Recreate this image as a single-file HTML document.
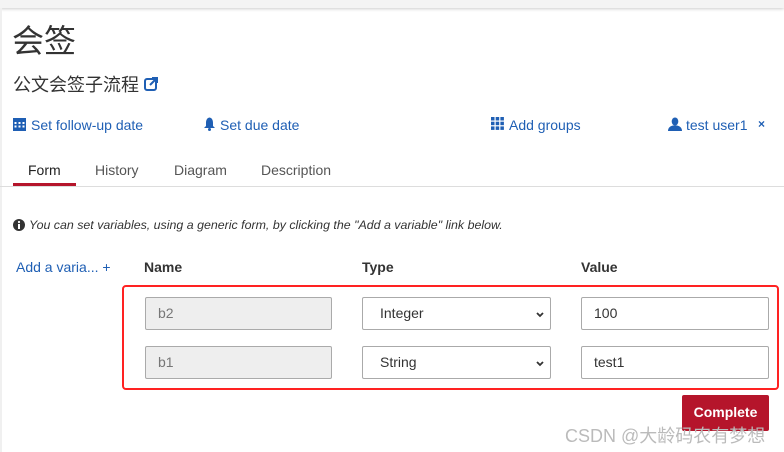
<!DOCTYPE html>
<html><head><meta charset="utf-8"><style>
*{margin:0;padding:0;box-sizing:border-box}
body{width:784px;height:452px;background:#fff;font-family:"Liberation Sans","Noto Sans CJK SC",sans-serif;position:relative;overflow:hidden;color:#333}
.a{position:absolute;white-space:nowrap}
.link{color:#1f5fb4;font-size:14px}
.inp{position:absolute;height:33px;border:1px solid #aaa;border-radius:2px;font-size:14px;padding:0 12px;line-height:31px;background:#fff;color:#333}
.dis{background:#eee;color:#777}
.th{font-weight:bold;font-size:14px;color:#333}
.chev{position:absolute;right:5px;top:12px}
</style></head><body>
<div class="a" style="left:0;top:0;width:784px;height:8px;background:#f4f4f4;box-shadow:0 1px 3px rgba(0,0,0,.2)"></div>
<div class="a" style="left:0;top:8px;width:2px;height:444px;background:#f0f0f0"></div>
<div class="a" style="left:12px;top:17px;font-size:32px;color:#333;font-family:'Noto Sans CJK SC',sans-serif;line-height:44px">会签</div>
<div class="a" style="left:13px;top:72px;font-size:18px;color:#333;font-family:'Noto Sans CJK SC',sans-serif;line-height:24px">公文会签子流程</div>
<svg class="a" style="left:144px;top:77px" width="14" height="14" viewBox="0 0 14 14"><rect x="1" y="2" width="11" height="11" rx="2" fill="none" stroke="#1f5fb4" stroke-width="2"/><path d="M6 8L12 2M8 1h5v5" stroke="#1f5fb4" stroke-width="2" fill="none"/></svg>
<svg class="a" style="left:13px;top:117px" width="13" height="14" viewBox="0 0 13 14"><rect x="0" y="1" width="13" height="13" fill="#1f5fb4"/><g fill="#fff"><rect x="1.5" y="5" width="2" height="2"/><rect x="5.5" y="5" width="2" height="2"/><rect x="9.5" y="5" width="2" height="2"/><rect x="1.5" y="8.5" width="2" height="2"/><rect x="5.5" y="8.5" width="2" height="2"/><rect x="9.5" y="8.5" width="2" height="2"/></g></svg>
<div class="a link" style="left:31px;top:117px">Set follow-up date</div>
<svg class="a" style="left:203px;top:117px" width="13" height="14" viewBox="0 0 13 14"><path d="M6.5 0.5C4 1 3 3 3 6v3L1 11h11l-2-2V6c0-3-1-5-3.5-5.5z" fill="#1f5fb4"/><circle cx="6.5" cy="12.5" r="1.5" fill="#1f5fb4"/></svg>
<div class="a link" style="left:220px;top:117px">Set due date</div>
<svg class="a" style="left:491px;top:117px" width="13" height="13" viewBox="0 0 13 13" fill="#1f5fb4"><rect x="0" y="0" width="3.5" height="3.5"/><rect x="4.7" y="0" width="3.5" height="3.5"/><rect x="9.4" y="0" width="3.5" height="3.5"/><rect x="0" y="4.7" width="3.5" height="3.5"/><rect x="4.7" y="4.7" width="3.5" height="3.5"/><rect x="9.4" y="4.7" width="3.5" height="3.5"/><rect x="0" y="9.4" width="3.5" height="3.5"/><rect x="4.7" y="9.4" width="3.5" height="3.5"/><rect x="9.4" y="9.4" width="3.5" height="3.5"/></svg>
<div class="a link" style="left:509px;top:117px">Add groups</div>
<svg class="a" style="left:668px;top:117px" width="14" height="14" viewBox="0 0 14 14" fill="#1f5fb4"><ellipse cx="7" cy="4.5" rx="3.3" ry="4"/><path d="M0 14c0-3 2-5 5-5.5h4c3 .5 5 2.5 5 5.5z"/></svg>
<div class="a link" style="left:686px;top:117px">test user1</div>
<div class="a" style="left:758px;top:117px;font-size:12px;color:#1f5fb4;font-weight:bold">×</div>
<div class="a" style="left:28px;top:162px;font-size:14px;color:#222">Form</div>
<div class="a" style="left:95px;top:162px;font-size:14px;color:#555">History</div>
<div class="a" style="left:174px;top:162px;font-size:14px;color:#555">Diagram</div>
<div class="a" style="left:261px;top:162px;font-size:14px;color:#555">Description</div>
<div class="a" style="left:0;top:186px;width:784px;height:1px;background:#ddd"></div>
<div class="a" style="left:13px;top:183px;width:63px;height:3px;background:#b5152b"></div>
<svg class="a" style="left:13px;top:219px" width="12" height="12" viewBox="0 0 12 12"><circle cx="6" cy="6" r="6" fill="#333"/><rect x="5" y="5" width="2" height="5" fill="#fff"/><circle cx="6" cy="3" r="1.1" fill="#fff"/></svg>
<div class="a" style="left:29px;top:218px;font-size:12.4px;font-style:italic;color:#333">You can set variables, using a generic form, by clicking the "Add a variable" link below.</div>
<div class="a link" style="left:16px;top:259px">Add a varia... +</div>
<div class="a th" style="left:144px;top:259px">Name</div>
<div class="a th" style="left:362px;top:259px">Type</div>
<div class="a th" style="left:581px;top:259px">Value</div>
<div class="a" style="left:122px;top:285px;width:657px;height:105px;border:2px solid #f22;border-radius:4px"></div>
<div class="inp dis" style="left:145px;top:297px;width:187px">b2</div>
<div class="inp" style="left:362px;top:297px;width:189px;padding-left:17px">Integer<svg class="chev" width="10" height="10" viewBox="0 0 10 10"><path d="M2 3l3 3 3-3" stroke="#333" stroke-width="1.8" fill="none"/></svg></div>
<div class="inp" style="left:581px;top:297px;width:188px">100</div>
<div class="inp dis" style="left:145px;top:346px;width:187px">b1</div>
<div class="inp" style="left:362px;top:346px;width:189px;padding-left:17px">String<svg class="chev" width="10" height="10" viewBox="0 0 10 10"><path d="M2 3l3 3 3-3" stroke="#333" stroke-width="1.8" fill="none"/></svg></div>
<div class="inp" style="left:581px;top:346px;width:188px">test1</div>
<div class="a" style="left:682px;top:395px;width:87px;height:36px;background:#b5152b;border-radius:2px;color:#fff;font-size:14px;font-weight:bold;text-align:center;line-height:34px">Complete</div>
<div class="a" style="left:565px;top:422px;font-size:18px;color:#bbb;font-family:'Liberation Sans','Noto Sans CJK SC',sans-serif">CSDN @大龄码农有梦想</div>
</body></html>
